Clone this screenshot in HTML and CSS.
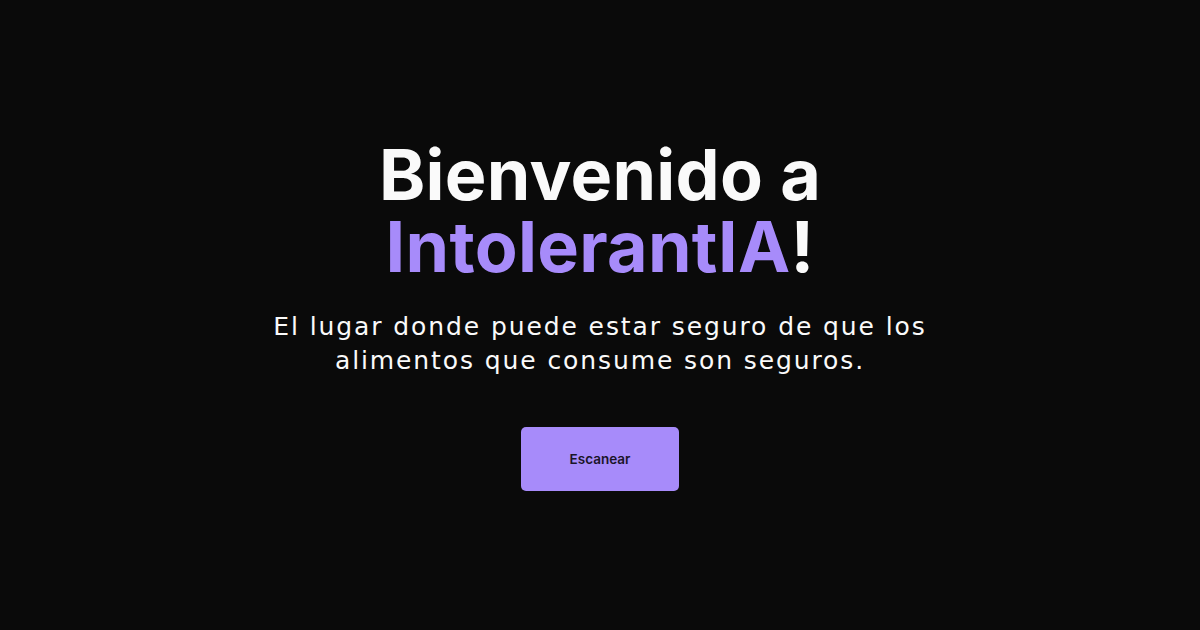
FILE: index.html
```html
<!DOCTYPE html>
<html lang="es">
<head>
<meta charset="utf-8">
<title>IntolerantIA</title>
<link rel="stylesheet" href="styles.css">
</head>
<body>
<main class="hero">
  <h1 class="title">Bienvenido a<br><span class="brand">IntolerantIA</span>!</h1>
  <p class="subtitle">El lugar donde puede estar seguro de que los<br>alimentos que consume son seguros.</p>
  <button class="cta">Escanear</button>
</main>
</body>
</html>
```

FILE: styles.css
```css
html, body {
  margin: 0;
  padding: 0;
  background: #0a0a0a;
  color: #fafafa;
  font-family: Inter, "Noto Sans", sans-serif;
}
.hero {
  min-height: 100vh;
  display: flex;
  flex-direction: column;
  align-items: center;
  justify-content: center;
  text-align: center;
}
.title {
  margin: 0;
  font-size: 70px;
  line-height: 72px;
  font-weight: 700;
  letter-spacing: 0.3px;
}
.brand {
  color: #a78bfa;
}
.subtitle {
  margin: 27px 0 0;
  font-family: "DejaVu Sans", sans-serif;
  font-size: 25px;
  line-height: 34px;
  font-weight: 400;
  letter-spacing: 1.9px;
}
.cta {
  margin-top: 49px;
  width: 158px;
  height: 64px;
  border: none;
  border-radius: 5px;
  background: #a78bfa;
  color: #1a1528;
  font-family: Inter, sans-serif;
  font-size: 13.5px;
  font-weight: 600;
}
```
